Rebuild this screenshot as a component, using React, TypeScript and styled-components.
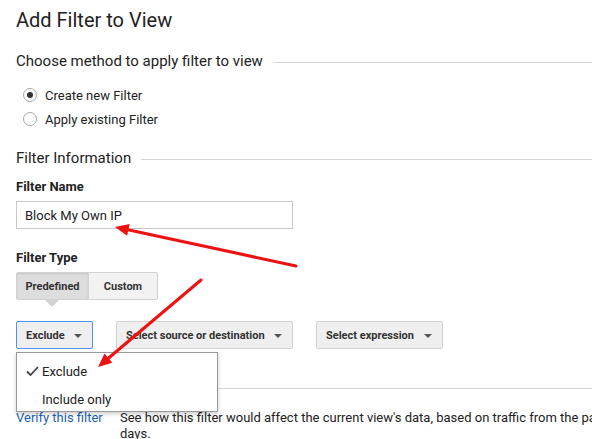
import styled, { createGlobalStyle } from "styled-components";

const GlobalStyle = createGlobalStyle`
    body {
        margin: 0;
        background: #fff;
        font-family: Roboto, 'Liberation Sans', Arial, sans-serif;
        color: #222;
    }
`

const Page = styled.div`
    position: relative;
    width: 592px;
    height: 439px;
    overflow: hidden;
    padding-left: 16px;
    box-sizing: border-box;
`

const Title = styled.h1`
    margin: 0;
    padding-top: 8px;
    font-size: 20px;
    font-weight: 400;
    line-height: 24px;
    height: 41px;
`

const SectionHeader = styled.div<{ $top: number }>`
    display: flex;
    align-items: center;
    gap: 10px;
    height: 24px;
    margin-top: ${(p) => p.$top}px;
    font-size: 15px;
    color: #222;

    &::after {
        content: '';
        flex: 1;
        height: 1px;
        background: #d6d6d6;
        margin-top: 3px;
    }
`

const RadioList = styled.div`
    display: flex;
    flex-direction: column;
    margin-top: 10px;
    padding-left: 7px;
`

const RadioRow = styled.label`
    display: flex;
    align-items: center;
    gap: 8px;
    height: 24px;
    font-size: 13px;
`

const RadioCircle = styled.span<{ $checked?: boolean }>`
    width: 12px;
    height: 12px;
    border: 1px solid #a8a8a8;
    border-radius: 50%;
    display: flex;
    align-items: center;
    justify-content: center;

    &::after {
        content: '';
        width: 6px;
        height: 6px;
        border-radius: 50%;
        background: ${(p) => (p.$checked ? "#333" : "transparent")};
    }
`

const FieldLabel = styled.div<{ $top: number }>`
    font-size: 13px;
    font-weight: 700;
    line-height: 18px;
    margin-top: ${(p) => p.$top}px;
`

const TextInput = styled.div`
    width: 277px;
    height: 28px;
    box-sizing: border-box;
    border: 1px solid #c8c8c8;
    margin-top: 5px;
    padding-left: 8px;
    display: flex;
    align-items: center;
    font-size: 13px;
`

const Segmented = styled.div`
    position: relative;
    display: flex;
    width: 142px;
    height: 28px;
    margin-top: 5px;
`

const SegButton = styled.div<{ $active?: boolean; $w: number }>`
    width: ${(p) => p.$w}px;
    box-sizing: border-box;
    display: flex;
    align-items: center;
    justify-content: center;
    font-size: 11px;
    font-weight: 700;
    color: #333;
    border: 1px solid #d2d2d2;
    background: ${(p) => (p.$active ? "#dddddd" : "#f2f2f2")};
    border-radius: ${(p) => (p.$active ? "2px 0 0 2px" : "0 2px 2px 0")};
    margin-left: ${(p) => (p.$active ? "0" : "-1px")};
    box-shadow: ${(p) => (p.$active ? "inset 0 1px 2px rgba(0,0,0,0.1)" : "none")};
`

const Pointer = styled.span`
    position: absolute;
    left: 29px;
    top: 28px;
    width: 0;
    height: 0;
    border-left: 7px solid transparent;
    border-right: 7px solid transparent;
    border-top: 7px solid #d2d2d2;
`

const DropRow = styled.div`
    display: flex;
    gap: 23px;
    margin-top: 21px;
`

const DropWrap = styled.div`
    position: relative;
`

const DropButton = styled.div<{ $w: number; $focus?: boolean }>`
    width: ${(p) => p.$w}px;
    height: 28px;
    box-sizing: border-box;
    display: flex;
    align-items: center;
    justify-content: space-between;
    padding: 0 10px 0 9px;
    font-size: 11px;
    font-weight: 700;
    color: #333;
    background: #efefef;
    border: 1px solid ${(p) => (p.$focus ? "#4d90fe" : "#d2d2d2")};
    border-radius: 2px;
`

const Caret = styled.span`
    width: 0;
    height: 0;
    border-left: 4px solid transparent;
    border-right: 4px solid transparent;
    border-top: 4px solid #555;
    margin-top: 2px;
`

const Menu = styled.div`
    position: absolute;
    left: 0;
    top: 31px;
    width: 202px;
    height: 60px;
    box-sizing: border-box;
    background: #fff;
    border: 1px solid #999;
    box-shadow: 0 2px 4px rgba(0,0,0,0.2);
    z-index: 2;
    display: flex;
    flex-direction: column;
    padding: 4px 0 0 25px;
`

const MenuItem = styled.div`
    position: relative;
    flex-shrink: 0;
    height: 28px;
    display: flex;
    align-items: center;
    font-size: 13px;
    color: #222;

    svg {
        position: absolute;
        left: -16px;
        top: 9px;
    }
`

const Divider = styled.div`
    height: 1px;
    background: #d6d6d6;
    margin-top: 39px;
`

const VerifyRow = styled.div`
    display: grid;
    grid-template-columns: 104px 1fr;
    margin-top: 21px;
    font-size: 13px;
    line-height: 16px;
`

const VerifyLink = styled.span`
    color: #1a5fb4;
`

const VerifyText = styled.span`
    color: #222;
    white-space: nowrap;
`

const Annotations = styled.svg`
    position: absolute;
    left: 0;
    top: 0;
    z-index: 5;
    pointer-events: none;
`

const Arrow = ({ x1, y1, x2, y2 }: { x1: number; y1: number; x2: number; y2: number }) => {
    const a = Math.atan2(y2 - y1, x2 - x1);
    const len = 15;
    const spread = 0.42;
    const p1 = [x2 - len * Math.cos(a - spread), y2 - len * Math.sin(a - spread)];
    const p2 = [x2 - len * Math.cos(a + spread), y2 - len * Math.sin(a + spread)];
    const bx = x2 - (len - 3) * Math.cos(a);
    const by = y2 - (len - 3) * Math.sin(a);
    return (
        <g>
            <line x1={x1} y1={y1} x2={bx} y2={by} stroke="#ee1111" strokeWidth={3} strokeLinecap="round" />
            <polygon points={`${x2},${y2} ${p1[0]},${p1[1]} ${p2[0]},${p2[1]}`} fill="#ee1111" />
        </g>
    );
};

const App = () => {
    return (
        <>
            <GlobalStyle />
            <Page>
                <Title>Add Filter to View</Title>
                <SectionHeader $top={0}>Choose method to apply filter to view</SectionHeader>
                <RadioList>
                    <RadioRow><RadioCircle $checked />Create new Filter</RadioRow>
                    <RadioRow><RadioCircle />Apply existing Filter</RadioRow>
                </RadioList>
                <SectionHeader $top={15}>Filter Information</SectionHeader>
                <FieldLabel $top={8}>Filter Name</FieldLabel>
                <TextInput>Block My Own IP</TextInput>
                <FieldLabel $top={20}>Filter Type</FieldLabel>
                <Segmented>
                    <SegButton $active $w={73}>Predefined</SegButton>
                    <SegButton $w={70}>Custom</SegButton>
                    <Pointer />
                </Segmented>
                <DropRow>
                    <DropWrap>
                        <DropButton $w={77} $focus>Exclude<Caret /></DropButton>
                        <Menu>
                            <MenuItem>
                                <svg width="13" height="10" viewBox="0 0 13 10">
                                    <path d="M1 5.5 L4.5 9 L12 1" fill="none" stroke="#444" strokeWidth="1.8" />
                                </svg>
                                Exclude
                            </MenuItem>
                            <MenuItem>Include only</MenuItem>
                        </Menu>
                    </DropWrap>
                    <DropButton $w={177}>Select source or destination<Caret /></DropButton>
                    <DropButton $w={127}>Select expression<Caret /></DropButton>
                </DropRow>
                <Divider />
                <VerifyRow>
                    <VerifyLink>Verify this filter</VerifyLink>
                    <VerifyText>
                        See how this filter would affect the current view's data, based on traffic from the past 7
                        <br />days.
                    </VerifyText>
                </VerifyRow>
                <Annotations width="592" height="439">
                    <Arrow x1={296} y1={266} x2={115} y2={227} />
                    <Arrow x1={201} y1={280} x2={98} y2={367} />
                </Annotations>
            </Page>
        </>
    )
}

export default App
